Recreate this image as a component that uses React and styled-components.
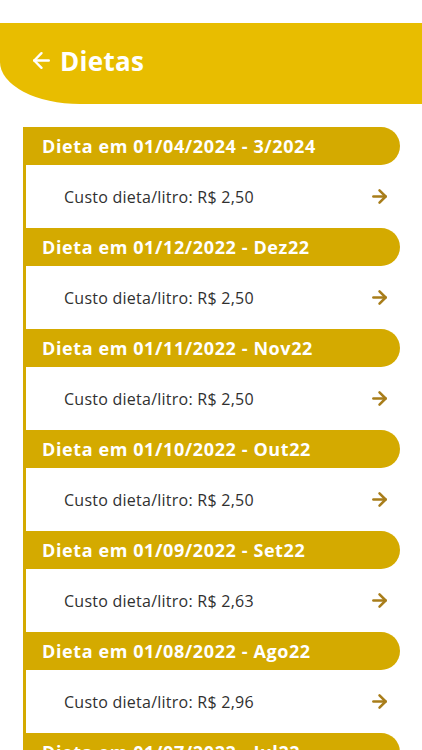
import React from "react";
import styled, { createGlobalStyle } from "styled-components";
import { ArrowLeft, ArrowRight } from "lucide-react";

const GlobalStyle = createGlobalStyle`
  body {
    margin: 0;
    background: #ffffff;
    font-family: "Open Sans", "Liberation Sans", sans-serif;
  }
`;

const Page = styled.div`
  padding-top: 23px;
  height: 750px;
  overflow: hidden;
`;

// Top yellow bar with the big curved corner
const Header = styled.header`
  height: 81px;
  box-sizing: border-box;
  padding: 0 0 6px 29px;
  background: #e8bd00;
  border-bottom-left-radius: 80px 42px;
  display: flex;
  align-items: center;
  gap: 6px;
  color: #ffffff;
`;

const Title = styled.h1`
  margin: 0;
  font-size: 26px;
  font-weight: 700;
  letter-spacing: 0.3px;
`;

const List = styled.div`
  margin: 23px 22px 0 23px;
  border-left: 3px solid #d4aa00;
  display: flex;
  flex-direction: column;
`;

const Item = styled.div`
  display: flex;
  flex-direction: column;
`;

const ItemHead = styled.div`
  height: 38px;
  margin-left: -3px;
  background: #d4aa00;
  border-radius: 0 19px 19px 0;
  display: flex;
  align-items: center;
  padding-left: 19px;
  color: #ffffff;
  font-size: 18px;
  font-weight: 700;
  letter-spacing: 0.6px;
`;

const ItemBody = styled.div`
  height: 63px;
  display: flex;
  align-items: center;
  justify-content: space-between;
  padding: 0 10px 0 38px;
  color: #303030;
  font-size: 16px;
  letter-spacing: 0.25px;
`;

const diets = [
  { date: "01/04/2024", label: "3/2024", cost: "2,50" },
  { date: "01/12/2022", label: "Dez22", cost: "2,50" },
  { date: "01/11/2022", label: "Nov22", cost: "2,50" },
  { date: "01/10/2022", label: "Out22", cost: "2,50" },
  { date: "01/09/2022", label: "Set22", cost: "2,63" },
  { date: "01/08/2022", label: "Ago22", cost: "2,96" },
  { date: "01/07/2022", label: "Jul22", cost: "2,96" },
];

export default function App() {
  return (
    <Page>
      <GlobalStyle />
      <Header>
        <ArrowLeft size={25} strokeWidth={2.3} />
        <Title>Dietas</Title>
      </Header>
      <List>
        {diets.map((d) => (
          <Item key={d.date}>
            <ItemHead>
              Dieta em {d.date} - {d.label}
            </ItemHead>
            <ItemBody>
              <span>Custo dieta/litro: R$ {d.cost}</span>
              <ArrowRight size={21} strokeWidth={2.9} color="#a87d1a" />
            </ItemBody>
          </Item>
        ))}
      </List>
    </Page>
  );
}
